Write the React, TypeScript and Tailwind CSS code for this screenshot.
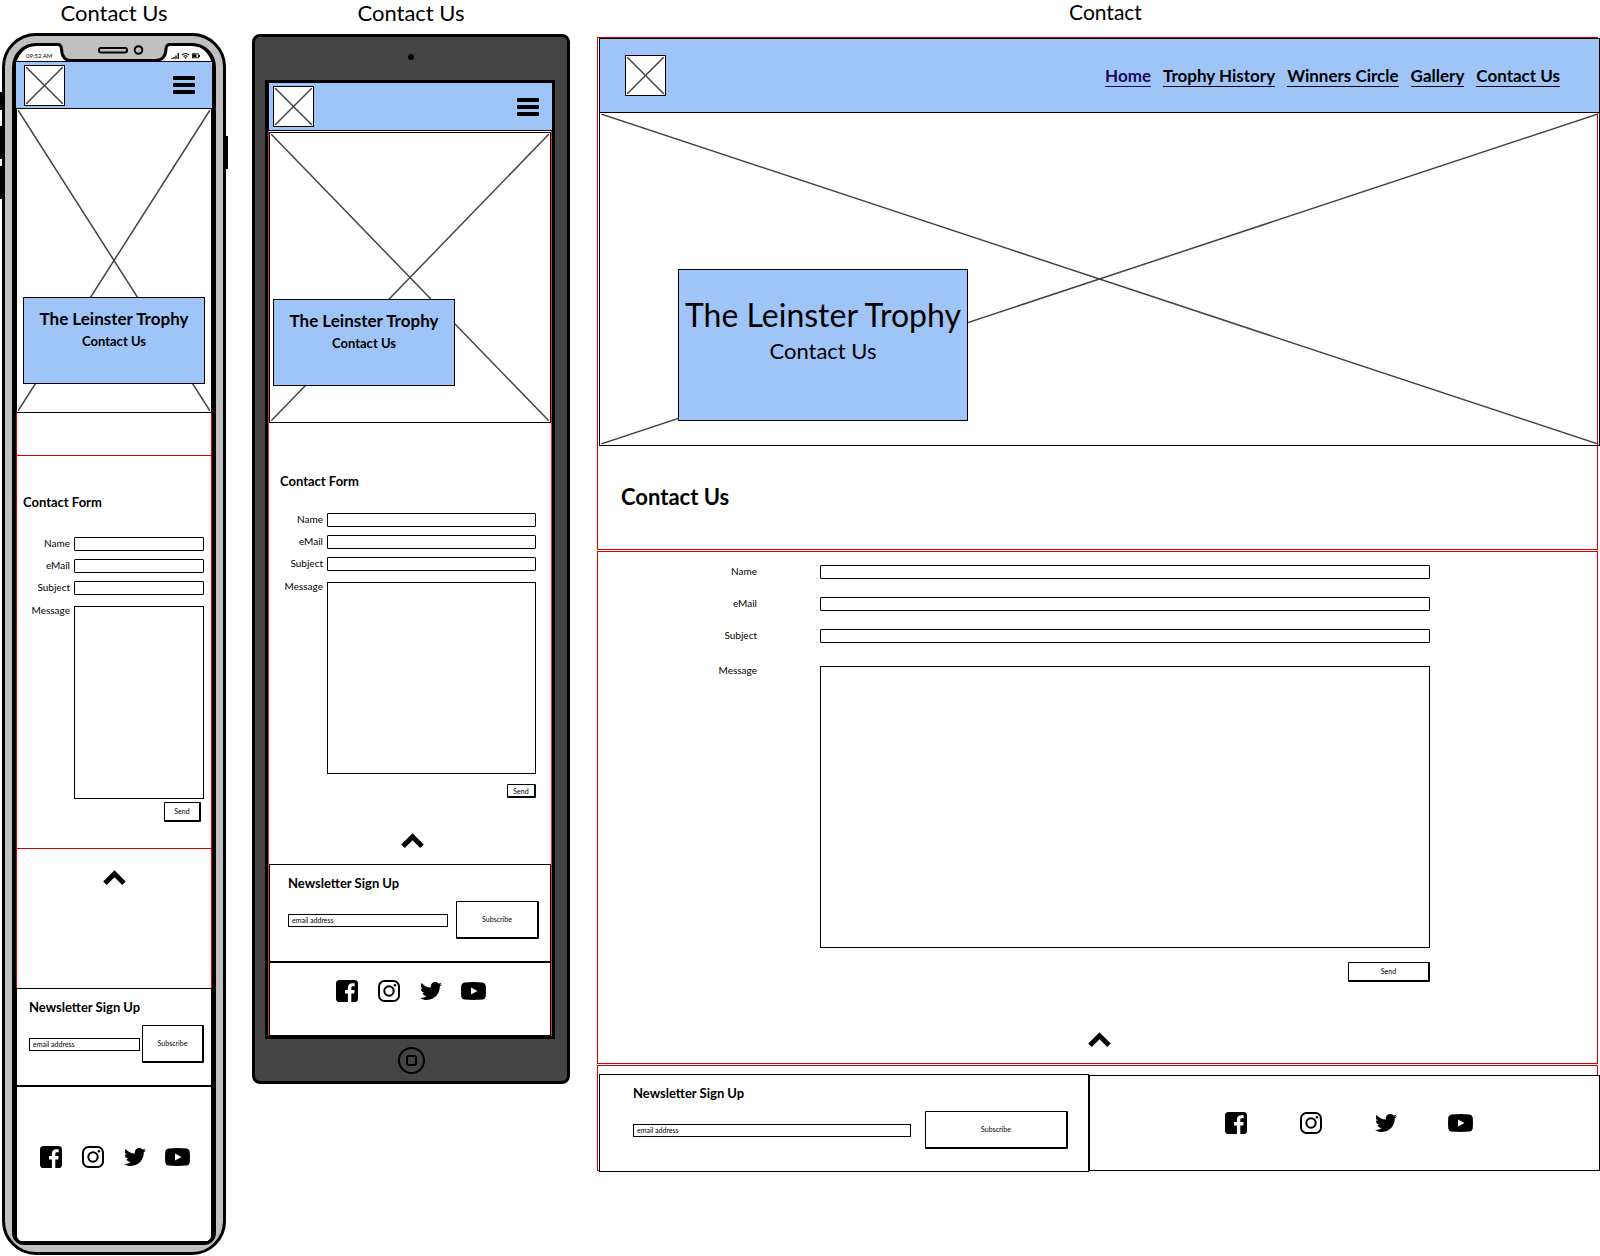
import React from "react";
import { FaTwitter } from "react-icons/fa";

type Device = "phone" | "tablet" | "desktop";

function Crossed() {
  return (
    <svg className="block size-full" aria-hidden="true" stroke="#444" strokeWidth="1.5">
      <line x1="0" y1="0" x2="100%" y2="100%" />
      <line x1="100%" y1="0" x2="0" y2="100%" />
    </svg>
  );
}

function Logo() {
  return (
    <a href="#home" aria-label="Logo" className="block size-[41px] shrink-0 border border-black bg-white p-px">
      <Crossed />
    </a>
  );
}

function MenuButton() {
  return (
    <button type="button" aria-label="Menu" className="flex w-[22px] flex-col gap-[3px]">
      <span className="h-1 w-full rounded-[1px] bg-black" />
      <span className="h-1 w-full rounded-[1px] bg-black" />
      <span className="h-1 w-full rounded-[1px] bg-black" />
    </button>
  );
}

function SmallCard() {
  return (
    <div className="h-[87px] w-[182px] border border-black bg-[#9fc5f8] pt-[9px] text-center font-bold">
      <h1 className="text-[17px] leading-6">The Leinster Trophy</h1>
      <p className="text-[13px] leading-5">Contact Us</p>
    </div>
  );
}

function BackToTop() {
  return (
    <a href="#top" aria-label="Back to top" className="block">
      <svg width="23" height="15" viewBox="0 0 23 15" fill="none" stroke="#000" strokeWidth="5">
        <path d="M2 13.2 11.5 3.8 21 13.2" />
      </svg>
    </a>
  );
}

function FacebookIcon() {
  return (
    <svg width="22" height="22" viewBox="0 0 22 22" aria-hidden="true">
      <rect width="22" height="22" rx="3.6" fill="#000" />
      <path
        d="M11.9 22v-8.6H9V10h2.9V7.700C11.900 4.800 13.600 3.200 16.200 3.200c1.200 0 2.200.1 2.500.15v3h-1.800c-1.300 0-1.600.65-1.600 1.600V10h3.300l-.45 3.400H15.300V22z"
        fill="#fff"
      />
    </svg>
  );
}

function InstagramIcon() {
  return (
    <svg width="22" height="22" viewBox="0 0 22 22" fill="none" stroke="#000" strokeWidth="2" aria-hidden="true">
      <rect x="1" y="1" width="20" height="20" rx="5.500" />
      <circle cx="11" cy="11" r="4.700" />
      <circle cx="16.900" cy="5.200" r="1.300" fill="#000" stroke="none" />
    </svg>
  );
}

function YoutubeIcon() {
  return (
    <svg width="25" height="18" viewBox="0 0 25 18" aria-hidden="true">
      <path d="M3.500.5Q12.500-.3 21.500.5 24.300.8 24.700 3.500 25.200 9 24.700 14.500 24.300 17.200 21.500 17.500 12.500 18.300 3.500 17.500.7 17.200.3 14.500-.2 9 .3 3.500.7.8 3.500.5z" />
      <path d="M10 5.500v7l6.500-3.500z" fill="#fff" />
    </svg>
  );
}

const socialGaps: Record<Device, string> = {
  phone: "gap-[17px]",
  tablet: "gap-[17px]",
  desktop: "gap-[50px]",
};

const socialLinks = [
  { name: "Facebook", icon: <FacebookIcon /> },
  { name: "Instagram", icon: <InstagramIcon /> },
  { name: "Twitter", icon: <FaTwitter size={22} /> },
  { name: "YouTube", icon: <YoutubeIcon /> },
];

function Social({ device }: { device: Device }) {
  return (
    <div className={`flex items-center ${socialGaps[device]}`}>
      {socialLinks.map(({ name, icon }) => (
        <a key={name} href={`#${name}`} aria-label={name} className="flex w-[25px] justify-center">
          {icon}
        </a>
      ))}
    </div>
  );
}

const formStyles: Record<Device, { row: string; label: string; gap: string; last: string; area: string }> = {
  phone: { row: "gap-1", label: "w-[53px]", gap: "gap-2", last: "mt-[3px]", area: "h-[193px]" },
  tablet: { row: "gap-1", label: "w-[54px]", gap: "gap-2", last: "mt-[3px]", area: "h-[192px]" },
  desktop: { row: "gap-[63px]", label: "w-[159px]", gap: "gap-[18px]", last: "mt-[5px]", area: "h-[282px]" },
};

function Fields({ device }: { device: Device }) {
  const s = formStyles[device];
  const row = `flex ${s.row}`;
  const label = `shrink-0 text-right text-[10px] ${s.label}`;
  return (
    <div className={`flex flex-col ${s.gap}`}>
      {["Name", "eMail", "Subject"].map((name) => (
        <div key={name} className={row}>
          <label htmlFor={`${device}-${name}`} className={`leading-3 ${label}`}>{name}</label>
          <input
            id={`${device}-${name}`}
            className="h-[14px] min-w-0 flex-1 rounded-[1px] border border-black bg-white px-1 text-[8px]"
          />
        </div>
      ))}
      <div className={`${row} ${s.last}`}>
        <label htmlFor={`${device}-message`} className={`leading-2 ${label}`}>Message</label>
        <textarea
          id={`${device}-message`}
          className={`block min-w-0 flex-1 resize-none border border-black bg-white p-1 text-[8px] ${s.area}`}
        />
      </div>
    </div>
  );
}

const sketchButton = "shrink-0 rounded-[1px] border border-r-2 border-b-2 border-black bg-white text-[7px]";

const newsletterStyles: Record<Device, { box: string; gap: string; button: string }> = {
  phone: { box: "pl-[12px] pr-[7px]", gap: "gap-[2px]", button: "w-[62px]" },
  tablet: { box: "pl-[18px] pr-[11px]", gap: "gap-2", button: "w-[83px]" },
  desktop: { box: "pl-[33px] pr-[20px]", gap: "gap-[14px]", button: "w-[143px]" },
};

function Newsletter({ device }: { device: Device }) {
  const s = newsletterStyles[device];
  return (
    <form className={`h-[98px] border border-black bg-white pt-2 ${s.box}`} onSubmit={(e) => e.preventDefault()}>
      <h2 className="text-[13px] font-bold leading-5">Newsletter Sign Up</h2>
      <div className={`mt-2 flex items-center ${s.gap}`}>
        <input
          type="email"
          aria-label="email address"
          placeholder="email address"
          className="h-[13px] min-w-0 flex-1 border border-black bg-white px-[3px] text-[7px] leading-[10px] placeholder:text-black placeholder:opacity-100"
        />
        <button type="submit" className={`h-[38px] ${sketchButton} ${s.button}`}>Subscribe</button>
      </div>
    </form>
  );
}

function StatusBar() {
  return (
    <div className="relative flex h-4 items-center justify-between border-b border-black pl-[10px] pr-[12px] pt-1">
      <span className="text-[6px] leading-[8px]">09:52 AM</span>
      <svg width="29" height="8" viewBox="0 0 29 8" aria-hidden="true">
        <path d="M1 7V6M3 7V5M5 7V3.500M7.300 7V1" stroke="#000" strokeWidth="1.300" />
        <path d="M11 3Q14.500 0 18 3M12.500 4.500Q14.500 3 16.500 4.500" fill="none" stroke="#000" strokeWidth="1.200" />
        <path d="M13.300 5.300h2.400L14.500 7z" />
        <rect x="21.500" y="1.800" width="6" height="4" fill="none" stroke="#000" strokeWidth=".8" />
        <path d="M22 2.300h3.500v3H22zM28 3h1v2h-1z" />
      </svg>
      <svg className="absolute -top-[4px] left-[42px]" width="112" height="21" viewBox="0 0 112 21" aria-hidden="true">
        <path d="M1 0V2.500Q3 3 3.500 7 4 18.500 13 18.500H97Q107.500 18.500 108 7 108.500 3 111 2.500V0z" fill="#c0c0c0" />
        <path
          d="M0 2.500Q3 2.500 3.500 7 4 18.500 13 18.500H97Q107.500 18.500 108 7 108.500 2.500 112 2.500"
          fill="none"
          stroke="#000"
          strokeWidth="3"
        />
        <rect x="41" y="6" width="28" height="4.500" rx="2" fill="#c0c0c0" stroke="#000" strokeWidth="2" />
        <circle cx="80.500" cy="8" r="3.800" fill="#c0c0c0" stroke="#000" strokeWidth="2" />
      </svg>
    </div>
  );
}

function Phone() {
  return (
    <section className="w-[224px] shrink-0">
      <p className="mb-2 flex h-[25px] items-center justify-center text-[22px] leading-[25px]">Contact Us</p>
      <div className="relative rounded-[34px] border-[3px] border-black bg-[#c0c0c0] p-[7px]">
        <span className="absolute -left-[5px] top-[56px] h-[18px] w-[3px] bg-black" />
        <span className="absolute -left-[5px] top-[90px] h-[33px] w-[3px] bg-black" />
        <span className="absolute -left-[5px] top-[130px] h-[33px] w-[3px] bg-black" />
        <span className="absolute -right-[5px] top-[100px] h-[33px] w-[3px] bg-black" />
        <div className="rounded-t-[24px] rounded-b-[12px] border-x-4 border-y-[3px] border-black bg-white">
          <StatusBar />
          <header className="flex h-[47px] items-center justify-between border-b border-black bg-[#9fc5f8] pl-2 pr-[17px]">
            <Logo />
            <MenuButton />
          </header>
          <div className="grid h-[304px] border-x border-b border-black">
            <div className="col-start-1 row-start-1 p-px"><Crossed /></div>
            <div className="col-start-1 row-start-1 self-end justify-self-center pb-7"><SmallCard /></div>
          </div>
          <div className="border-x border-[#d90000]">
            <div className="h-[43px] border-b border-[#d90000]" />
            <form
              className="h-[393px] border-b border-[#d90000] pr-[7px] pt-[36px]"
              onSubmit={(e) => e.preventDefault()}
            >
              <h2 className="mb-[25px] pl-[6px] text-[13px] font-bold leading-5">Contact Form</h2>
              <Fields device="phone" />
              <div className="mt-[3px] flex justify-end pr-[3px]">
                <button type="submit" className={`h-[20px] w-[37px] ${sketchButton}`}>Send</button>
              </div>
            </form>
            <div className="flex h-[139px] justify-center pt-[21px]"><BackToTop /></div>
          </div>
          <Newsletter device="phone" />
          <footer className="flex h-[156px] items-center justify-center border border-black pb-[14px]">
            <Social device="phone" />
          </footer>
        </div>
      </div>
    </section>
  );
}

function Tablet() {
  return (
    <section className="mr-px w-[318px] shrink-0">
      <p className="mb-[9px] flex h-[25px] items-center justify-center text-[22px] leading-[25px]">Contact Us</p>
      <div className="rounded-[8px] border-[3px] border-black bg-[#444] pl-[10px] pr-[12px]">
        <div className="flex h-[43px] items-center justify-center pb-[3px] pl-[2px]">
          <span className="size-[6px] rounded-full bg-black" />
        </div>
        <div className="border-[3px] border-black bg-white">
          <header className="flex h-[48px] items-center justify-between border-b border-l border-black bg-[#9fc5f8] pl-1 pr-[13px]">
            <Logo />
            <MenuButton />
          </header>
          <div className="border-x border-[#e03030] pt-px">
            <div className="grid h-[291px] border border-black">
              <div className="col-start-1 row-start-1 p-px"><Crossed /></div>
              <div className="col-start-1 row-start-1 self-end pb-[36px] pl-[3px]"><SmallCard /></div>
            </div>
            <form className="h-[441px] pr-[15px] pt-[48px]" onSubmit={(e) => e.preventDefault()}>
              <h2 className="mb-[22px] pl-[11px] text-[13px] font-bold leading-5">Contact Form</h2>
              <Fields device="tablet" />
              <div className="mt-[10px] flex justify-end">
                <button type="submit" className={`h-[14px] w-[29px] leading-[10px] ${sketchButton}`}>Send</button>
              </div>
              <div className="mt-[35px] flex justify-center pl-[20px]"><BackToTop /></div>
            </form>
            <Newsletter device="tablet" />
            <footer className="flex h-[74px] items-center justify-center border border-black pb-[16px]">
              <Social device="tablet" />
            </footer>
          </div>
        </div>
        <div className="flex h-[42px] items-center justify-center pl-[2px]">
          <button
            type="button"
            aria-label="Home button"
            className="flex size-[27px] items-center justify-center rounded-full border-2 border-black"
          >
            <span className="size-[11px] rounded-[3px] border-2 border-black" />
          </button>
        </div>
      </div>
    </section>
  );
}

function Desktop() {
  return (
    <section className="min-w-0 flex-1">
      <p className="mb-[14px] flex h-[23px] items-center justify-center pl-[14px] text-[21px] leading-[23px]">Contact</p>
      <div className="mr-[2px] h-[513px] border border-[#d90000] pl-px">
        <header className="-mr-[3px] flex h-[75px] items-center justify-between border border-black bg-[#9fc5f8] pl-[25px] pr-[39px]">
          <Logo />
          <nav className="flex gap-[12px] pt-px text-[17px] font-bold leading-5">
            <a href="#home" className="border-b border-[#1b0a5c] text-[#1b0a5c]">Home</a>
            <a href="#history" className="border-b border-black">Trophy History</a>
            <a href="#winners" className="border-b border-black">Winners Circle</a>
            <a href="#gallery" className="border-b border-black">Gallery</a>
            <a href="#contact" className="border-b border-black">Contact Us</a>
          </nav>
        </header>
        <div className="-mr-[3px] grid h-[333px] border-x border-b border-black">
          <div className="col-start-1 row-start-1 p-px"><Crossed /></div>
          <div className="col-start-1 row-start-1 self-end pb-6 pl-[78px]">
            <div className="h-[152px] w-[290px] border border-black bg-[#9fc5f8] pt-[25px] text-center">
              <h1 className="whitespace-nowrap text-[32px] leading-10">The Leinster Trophy</h1>
              <p className="text-[22px] leading-8">Contact Us</p>
            </div>
          </div>
        </div>
        <h2 className="pl-[22px] pt-[37px] text-[22px] font-bold leading-7">Contact Us</h2>
      </div>
      <form
        className="mr-[2px] mt-px h-[513px] border border-[#d90000] pt-[13px]"
        onSubmit={(e) => e.preventDefault()}
      >
        <div className="pr-[167px]">
          <Fields device="desktop" />
          <div className="mt-[14px] flex justify-end">
            <button type="submit" className={`h-[20px] w-[82px] ${sketchButton}`}>Send</button>
          </div>
        </div>
        <div className="mt-[50px] flex justify-center pl-1"><BackToTop /></div>
      </form>
      <footer className="mr-[2px] mt-px h-[106px] border border-[#d90000] pl-px pt-2">
        <div className="-mr-[3px] flex">
          <div className="w-[490px] shrink-0"><Newsletter device="desktop" /></div>
          <div className="mt-px flex h-[96px] flex-1 items-center justify-center border border-black bg-white pl-[7px]">
            <Social device="desktop" />
          </div>
        </div>
      </footer>
    </section>
  );
}

export default function App() {
  return (
    <main
      id="top"
      className="flex min-h-screen gap-[26px] overflow-x-hidden bg-white pl-[2px] font-['Lato',sans-serif] text-black"
    >
      <Phone />
      <Tablet />
      <Desktop />
    </main>
  );
}
